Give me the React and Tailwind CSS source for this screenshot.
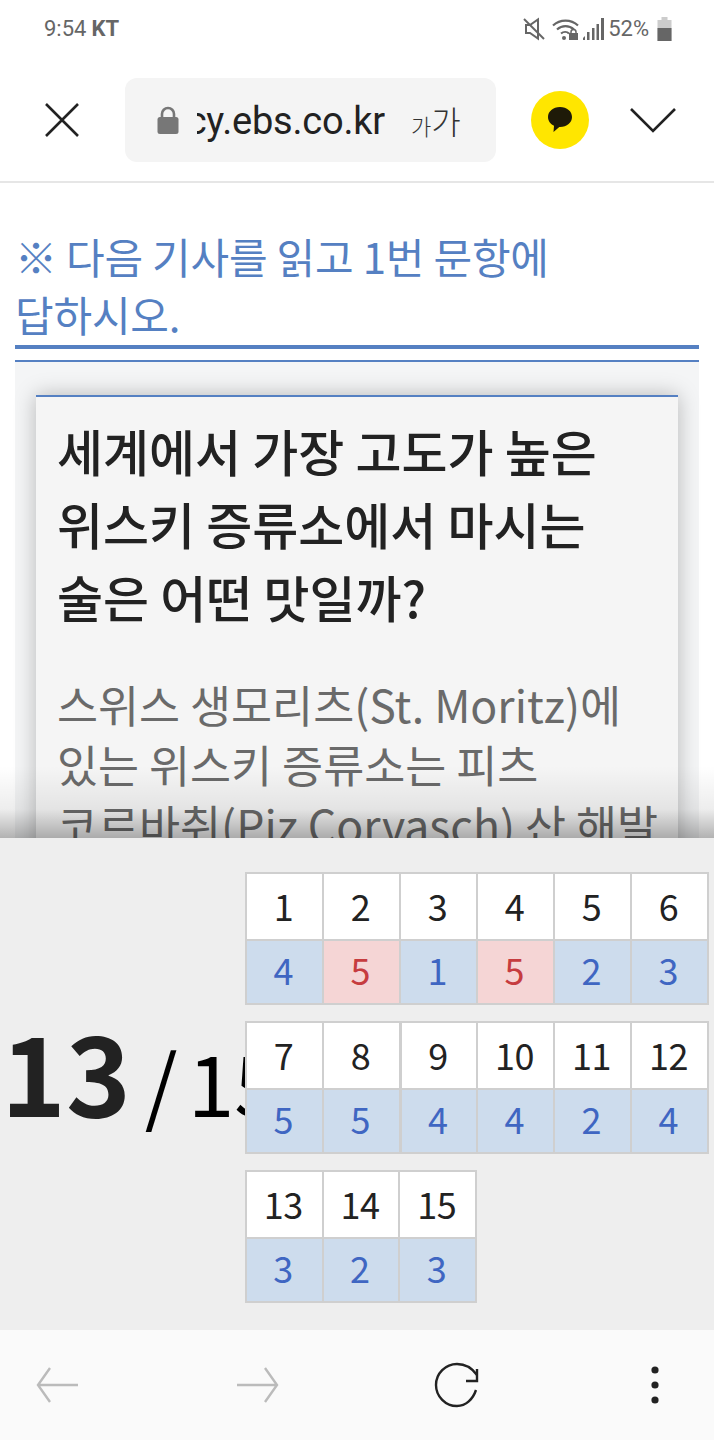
function Table({ nums, answers, wrong = [], cols = 6, thick = false }) {
  const grid = cols === 6 ? "grid-cols-6 w-[464px]" : "grid-cols-3 w-[232px]";
  return (
    <div className={`grid ${grid} grid-rows-[65px_62px] gap-[2px] p-[2px] bg-[#cfcfcf]`}>
      {nums.map((n, i) => (
        <div key={n} className={`flex items-center justify-center pr-[2px] pb-[3px] bg-white text-[#222] text-[36px] tracking-[-0.5px] ${thick && i === 2 ? "ml-px" : ""}`}>{n}</div>
      ))}
      {answers.map((a, i) => (
        <div key={i} className={`flex items-center justify-center pr-[2px] pb-[6px] text-[36px] ${wrong.includes(i) ? "bg-[#f5d5d5] text-[#c63c3f]" : "bg-[#cddced] text-[#3f66c2]"} ${thick && i === 2 ? "ml-px" : ""}`}>{a}</div>
      ))}
    </div>
  );
}

export default function App() {
  return (
    <div className="flex flex-col w-[714px] h-[1440px] overflow-hidden bg-white font-['Noto_Sans_CJK_KR','Noto_Sans',sans-serif]">
      {/* status bar */}
      <div className="flex items-center justify-between h-[57px] shrink-0 pl-[44px] pr-[42px] font-['Roboto',sans-serif] text-[#666] text-[22px]">
        <div className="flex items-center gap-[5px]"><span>9:54</span><span className="font-bold">KT</span></div>
        <div className="flex items-center">
          <svg width="22" height="24" viewBox="0 0 22 24" fill="none" stroke="#666" strokeWidth="2" className="mr-[7px]">
            <path d="M3 8h4l8-5.500v19L7 16H3z" fill="none" /><path d="M1 2l20 20" />
          </svg>
          <svg width="28" height="24" viewBox="0 0 28 24" fill="none" stroke="#666" strokeWidth="2.2" className="mr-[2px]">
            <path d="M1 8.500C8 2 19 2 26 8.500" /><path d="M5 12.500C10 8 17 8 22 12.500" /><path d="M9 16.500c2.500-2 6-2 8 0" />
            <circle cx="12" cy="21" r="2" fill="#666" stroke="none" />
            <rect x="17" y="16" width="9" height="7" fill="#666" stroke="none" /><path d="M19 16.500v-1.500a2.500 2.500 0 0 1 5 0v1.500" strokeWidth="1.5" />
          </svg>
          <svg width="24" height="24" viewBox="0 0 24 24" fill="#666" className="mr-[2px]">
            <path d="M1 21l2-2v4H1z" /><rect x="5" y="15" width="2.5" height="8" /><rect x="10" y="11" width="2.5" height="12" /><rect x="14.5" y="7" width="2.5" height="16" /><rect x="19" y="1" width="3" height="22" />
          </svg>
          <span className="mr-[8px]">52%</span>
          <svg width="15" height="24" viewBox="0 0 14 24">
            <path d="M4 0h6v3h4v21H0V3h4z" fill="#ccc" /><rect x="0" y="11" width="14" height="13" fill="#666" />
          </svg>
        </div>
      </div>

      {/* toolbar */}
      <div className="flex items-center h-[126px] shrink-0 border-b-2 border-[#e6e6e6] pt-[2px]">
        <svg width="34" height="34" viewBox="0 0 34 34" fill="none" stroke="#222" strokeWidth="2.6" className="ml-[45px]">
          <path d="M1 1l32 32M33 1L1 33" />
        </svg>
        <div className="ml-[46px] flex items-center w-[371px] h-[84px] rounded-[12px] bg-[#f4f4f4] pl-[32px] mt-[-1px]">
          <svg width="22" height="28" viewBox="0 0 22 28" className="shrink-0">
            <path d="M5 13V8a6 6 0 0 1 12 0v5" fill="none" stroke="#777" strokeWidth="2.6" />
            <rect x="0.5" y="11" width="21" height="17" rx="2.5" fill="#777" />
          </svg>
          <div className="w-[188px] overflow-hidden ml-[18px] mt-[4px] flex justify-end font-['Roboto',sans-serif] text-[38px] tracking-[-0.2px] text-[#222] whitespace-nowrap">cy.ebs.co.kr</div>
          <span className="ml-[26px] flex items-end text-[#333] leading-none font-light whitespace-nowrap">
            <span className="text-[22px]">가</span><span className="text-[32px]">가</span>
          </span>
        </div>
        <div className="ml-[35px] flex items-center justify-center w-[58px] h-[58px] rounded-full bg-[#ffe600]">
          <svg width="26" height="28" viewBox="0 0 26 28"><path d="M13 1C6 1 1 5.500 1 11c0 3.800 2.400 7 6 8.800L6.500 26l5.800-5h.7c7 0 12-4.400 12-10S20 1 13 1z" fill="#1e1a08" /></svg>
        </div>
        <svg width="46" height="26" viewBox="0 0 46 26" fill="none" stroke="#222" strokeWidth="2.6" className="ml-[41px]">
          <path d="M1 2l22 22L45 2" />
        </svg>
      </div>

      {/* article */}
      <div className="relative flex-1 min-h-0 overflow-hidden px-[15px] pt-[44px]">
        <div className="text-[42px] leading-[58px] tracking-[-0.2px] text-[#5580c2]">
          <div className="whitespace-nowrap">※ 다음 기사를 읽고 1번 문항에</div>
          <div className="whitespace-nowrap">답하시오.</div>
        </div>
        <div className="mt-[2px] h-[4px] bg-[#5580c2]" />
        <div className="mt-[11px] border-t-2 border-[#5580c2] bg-[#f4f5f6] px-[21px] pt-[33px] h-[600px]">
          <div className="border-t-2 border-[#5580c2] bg-[#f5f5f5] h-[560px] pl-[21px] pt-[17px] shadow-[0_0_20px_rgba(0,0,0,0.26)]">
            <div className="text-[50px] leading-[73px] font-medium text-[#222] whitespace-nowrap">
              <div>세계에서 가장 고도가 높은</div>
              <div>위스키 증류소에서 마시는</div>
              <div>술은 어떤 맛일까?</div>
            </div>
            <div className="mt-[41px] text-[44.6px] leading-[60px] text-[#6a6a6a] whitespace-nowrap">
              <div>스위스 생모리츠(St. Moritz)에</div>
              <div>있는 위스키 증류소는 피츠</div>
              <div>코르바취(Piz Corvasch) 산 해발</div>
            </div>
          </div>
        </div>
        <div className="absolute inset-x-0 bottom-0 h-[72px] bg-gradient-to-b from-transparent via-[rgba(0,0,0,0.07)] via-60% to-[rgba(0,0,0,0.3)]" />
      </div>

      {/* answer panel */}
      <div className="flex h-[492px] shrink-0 bg-[#eeeeee]">
        <div className="w-[245px] shrink-0 overflow-hidden flex items-center pl-[1px] pb-[30px] text-[#222]">
          <div className="flex items-baseline whitespace-nowrap">
            <span className="text-[110px] font-bold leading-none">13</span>
            <span className="text-[84px] leading-none text-black ml-[14px]">/</span>
            <span className="text-[84px] leading-none text-black ml-[10px]">15</span>
          </div>
        </div>
        <div className="flex flex-col gap-[16px] pt-[34px]">
          <Table nums={[1, 2, 3, 4, 5, 6]} answers={[4, 5, 1, 5, 2, 3]} wrong={[1, 3]} />
          <Table nums={[7, 8, 9, 10, 11, 12]} answers={[5, 5, 4, 4, 2, 4]} thick />
          <Table nums={[13, 14, 15]} answers={[3, 2, 3]} cols={3} />
        </div>
      </div>

      {/* nav */}
      <div className="flex items-center h-[110px] shrink-0 bg-[#fafafa]">
        <svg width="44" height="36" viewBox="0 0 44 36" fill="none" stroke="#bbb" strokeWidth="2.4" className="ml-[36px]">
          <path d="M42 18H2M14 1L2 18l12 17" />
        </svg>
        <svg width="44" height="36" viewBox="0 0 44 36" fill="none" stroke="#bbb" strokeWidth="2.4" className="ml-[155px]">
          <path d="M2 18h40M30 1l12 17-12 17" />
        </svg>
        <svg width="46" height="46" viewBox="0 0 46 46" fill="none" stroke="#222" strokeWidth="2.4" className="ml-[155px]">
          <path d="M42 28C39 37 32 44 23 44 11.500 44 2 34.500 2 23S11.500 2 23 2c8 0 15 4 20 11" /><path d="M43 7v12H32" />
        </svg>
        <svg width="8" height="40" viewBox="0 0 8 40" fill="#222" className="ml-[171px]">
          <circle cx="4" cy="5" r="3.6" /><circle cx="4" cy="20" r="3.6" /><circle cx="4" cy="35" r="3.6" />
        </svg>
      </div>
    </div>
  );
}
